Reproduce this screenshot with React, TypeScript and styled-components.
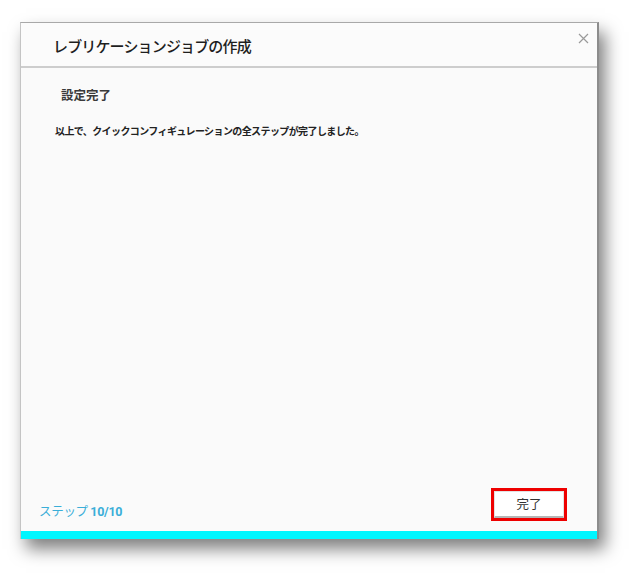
import React from "react";
import styled, { createGlobalStyle } from "styled-components";

const Global = createGlobalStyle`
  html, body { margin: 0; padding: 0; background: #ffffff; }
  body { font-family: "Noto Sans CJK JP", "Noto Sans", sans-serif; }
`;

const Page = styled.div`
  width: 643px;
  height: 582px;
  box-sizing: border-box;
  padding: 22px 0 0 20px;
  background: #ffffff;
  overflow: hidden;
`;

const Dialog = styled.div`
  position: relative;
  width: 579px;
  height: 517px;
  box-sizing: border-box;
  display: flex;
  flex-direction: column;
  background: #fafafa;
  border-top: 1px solid #a8a8a8;
  border-left: 1px solid #c4c4c4;
  border-right: 2px solid #8c8c8c;
  box-shadow: 6px 10px 16px rgba(0, 0, 0, 0.5);
`;

const Header = styled.div`
  height: 43px;
  display: flex;
  align-items: center;
  padding-left: 32px;
  background: #fbfbfb;
  border-bottom: 2px solid #cdcdcd;
`;

const Title = styled.h1`
  margin: 0;
  font-size: 15px;
  font-weight: 500;
  letter-spacing: -0.85px;
  color: #1e1e1e;
  line-height: 1;
  margin-top: 2px;
`;

const Close = styled.button`
  position: absolute;
  top: 8px;
  right: 7px;
  width: 14px;
  height: 14px;
  padding: 0;
  border: 0;
  background: transparent;
  display: flex;
  align-items: center;
  justify-content: center;
`;

const Body = styled.div`
  flex: 1;
  display: flex;
  flex-direction: column;
  padding: 19px 0 0 0;
`;

const SectionTitle = styled.div`
  padding-left: 40px;
  font-size: 12.5px;
  font-weight: 700;
  color: #3a3a3a;
  line-height: 16px;
`;

const Message = styled.p`
  margin: 21px 0 0 0;
  padding-left: 34px;
  font-size: 10px;
  font-weight: 700;
  letter-spacing: -0.6px;
  color: #222;
  line-height: 14px;
`;

const Footer = styled.div`
  display: flex;
  align-items: flex-end;
  justify-content: space-between;
  padding: 0 30px 10px 18px;
`;

const Step = styled.span`
  font-size: 12.5px;
  line-height: 14px;
  margin-bottom: 2px;
  color: #3aaed8;
  letter-spacing: -0.3px;
  b { font-weight: 700; font-family: "Roboto", "Noto Sans", sans-serif; }
`;

const Highlight = styled.div`
  border: 3px solid #ee0000;
  display: flex;
`;

const Button = styled.button`
  width: 70px;
  height: 27px;
  box-sizing: border-box;
  background: #ffffff;
  border: 1px solid #e2e2e2;
  border-bottom: 2px solid #b5b5b5;
  font-family: "Noto Sans CJK JP", sans-serif;
  font-size: 12.5px;
  color: #333;
  padding: 0;
  line-height: 1;
`;

const Bar = styled.div`
  height: 8px;
  background: #00f6ff;
`;

export default function App() {
  return (
    <Page>
      <Global />
      <Dialog>
        <Header>
          <Title>レブリケーションジョブの作成</Title>
        </Header>
        <Close aria-label="close">
          <svg width="11" height="11" viewBox="0 0 11 11">
            <path d="M1 1 L10 10 M10 1 L1 10" stroke="#9a9a9a" strokeWidth="1.2" fill="none" />
          </svg>
        </Close>
        <Body>
          <SectionTitle>設定完了</SectionTitle>
          <Message>以上で、クイックコンフィギュレーションの全ステップが完了しました。</Message>
        </Body>
        <Footer>
          <Step>ステップ <b>10/10</b></Step>
          <Highlight>
            <Button>完了</Button>
          </Highlight>
        </Footer>
        <Bar />
      </Dialog>
    </Page>
  );
}
